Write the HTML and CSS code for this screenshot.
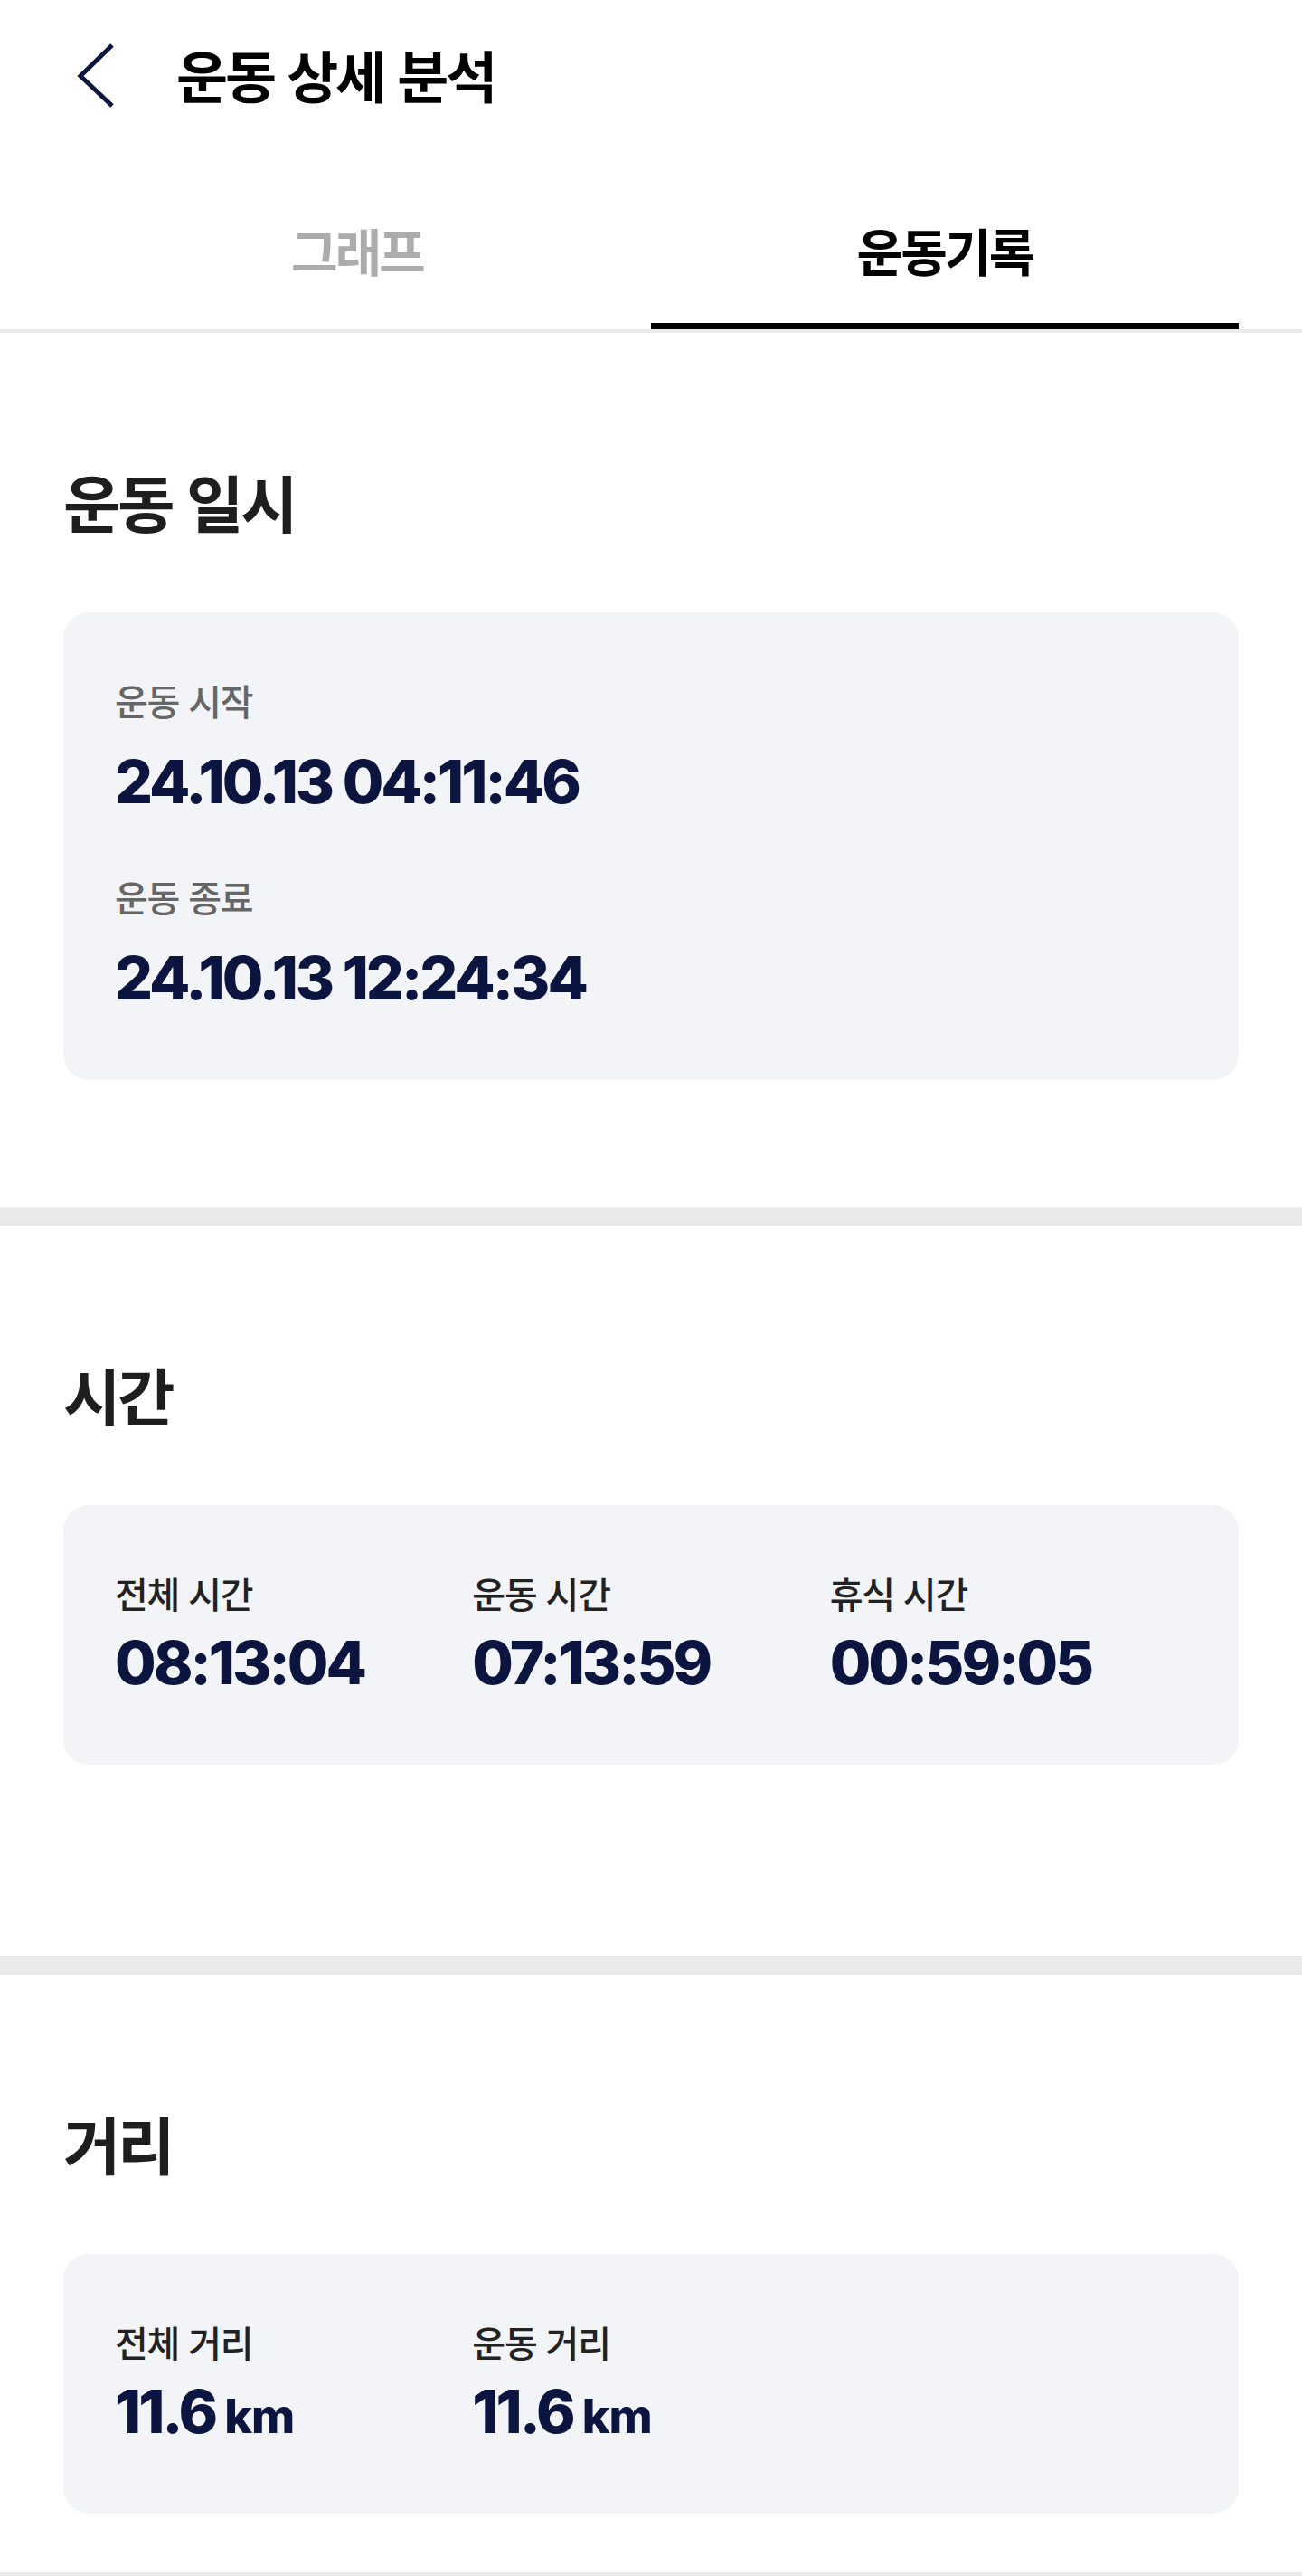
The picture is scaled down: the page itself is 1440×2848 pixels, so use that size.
FILE: index.html
```html
<!DOCTYPE html>
<html lang="ko">
<head>
<meta charset="utf-8">
<title>운동 상세 분석</title>
<link rel="stylesheet" href="styles.css">
</head>
<body>
<div class="page">
  <header class="topbar">
    <svg class="back" width="44" height="76" viewBox="0 0 44 76" aria-hidden="true">
      <polyline points="40,4 5,38 40,71" fill="none" stroke="#0b1540" stroke-width="5" stroke-linejoin="miter"/>
    </svg>
    <h1 class="title">운동 상세 분석</h1>
  </header>

  <nav class="tabs">
    <div class="tab">그래프</div>
    <div class="tab tab--active">운동기록</div>
  </nav>

  <section class="section section--date">
    <h2 class="section-title">운동 일시</h2>
    <div class="card card--stack">
      <div class="stat stat--loose">
        <div class="stat-label stat-label--muted">운동 시작</div>
        <div class="stat-value">24.10.13 04:11:46</div>
      </div>
      <div class="stat stat--loose">
        <div class="stat-label stat-label--muted">운동 종료</div>
        <div class="stat-value">24.10.13 12:24:34</div>
      </div>
    </div>
  </section>
  <div class="divider"></div>

  <section class="section section--time">
    <h2 class="section-title">시간</h2>
    <div class="card card--grid">
      <div class="stat">
        <div class="stat-label">전체 시간</div>
        <div class="stat-value">08:13:04</div>
      </div>
      <div class="stat">
        <div class="stat-label">운동 시간</div>
        <div class="stat-value">07:13:59</div>
      </div>
      <div class="stat">
        <div class="stat-label">휴식 시간</div>
        <div class="stat-value">00:59:05</div>
      </div>
    </div>
  </section>
  <div class="divider"></div>

  <section class="section section--distance">
    <h2 class="section-title">거리</h2>
    <div class="card card--grid">
      <div class="stat">
        <div class="stat-label">전체 거리</div>
        <div class="stat-value">11.6<span class="unit">km</span></div>
      </div>
      <div class="stat">
        <div class="stat-label">운동 거리</div>
        <div class="stat-value">11.6<span class="unit">km</span></div>
      </div>
    </div>
  </section>
  <div class="divider"></div>
</div>
</body>
</html>
```

FILE: styles.css
```css
* {
  box-sizing: border-box;
}

html, body {
  margin: 0;
  padding: 0;
  background: #ffffff;
}

body {
  font-family: "Noto Sans CJK KR", "Noto Sans", sans-serif;
  color: #1e1e1e;
}

.page {
  width: 1440px;
}

/* Top bar */
.topbar {
  display: flex;
  align-items: flex-start;
  height: 168px;
  padding: 46px 0 0 84px;
}

.back {
  display: block;
  flex: none;
}

.title {
  margin: 5px 0 0 67px;
  font-size: 62px;
  line-height: 1;
  font-weight: 700;
  letter-spacing: -0.05em;
  color: #000000;
}

/* Tabs */
.tabs {
  display: flex;
  padding: 0 70px;
  border-bottom: 4px solid #ebebeb;
}

.tab {
  flex: 1;
  height: 196px;
  padding-top: 80px;
  border-bottom: 7px solid transparent;
  text-align: center;
  font-size: 56px;
  line-height: 1;
  font-weight: 700;
  letter-spacing: -0.05em;
  color: #acacac;
}

.tab--active {
  color: #000000;
  border-bottom-color: #000000;
}

/* Sections */
.section {
  padding: 152px 70px 0;
}

.section--date {
  padding-bottom: 140px;
}

.section--time {
  padding-bottom: 211px;
}

.section--distance {
  padding-bottom: 65px;
}

.section-title {
  margin: 0 0 88px;
  font-size: 69px;
  line-height: 1;
  font-weight: 700;
  letter-spacing: -0.05em;
  color: #1e1e1e;
}

.divider {
  height: 21px;
  background: #eaeaea;
}

/* Cards */
.card {
  background: #f3f4f8;
  border-radius: 28px;
  padding: 77px 57px 80px;
}

.card--stack {
  display: flex;
  flex-direction: column;
  gap: 74px;
}

.card--grid {
  display: grid;
  grid-template-columns: repeat(3, 1fr);
}

.stat {
  display: flex;
  flex-direction: column;
  gap: 24px;
}

.stat--loose {
  gap: 37px;
}

.stat-label {
  font-size: 40px;
  line-height: 1;
  font-weight: 500;
  letter-spacing: -0.03em;
  color: #222222;
}

.stat-label--muted {
  color: #666666;
}

.stat-value {
  font-family: Inter, "Noto Sans", sans-serif;
  font-size: 66px;
  line-height: 1;
  font-weight: 800;
  letter-spacing: -0.045em;
  color: #0b1540;
  white-space: nowrap;
}

.unit {
  margin-left: 10px;
  font-size: 52px;
  letter-spacing: -0.02em;
}
```
